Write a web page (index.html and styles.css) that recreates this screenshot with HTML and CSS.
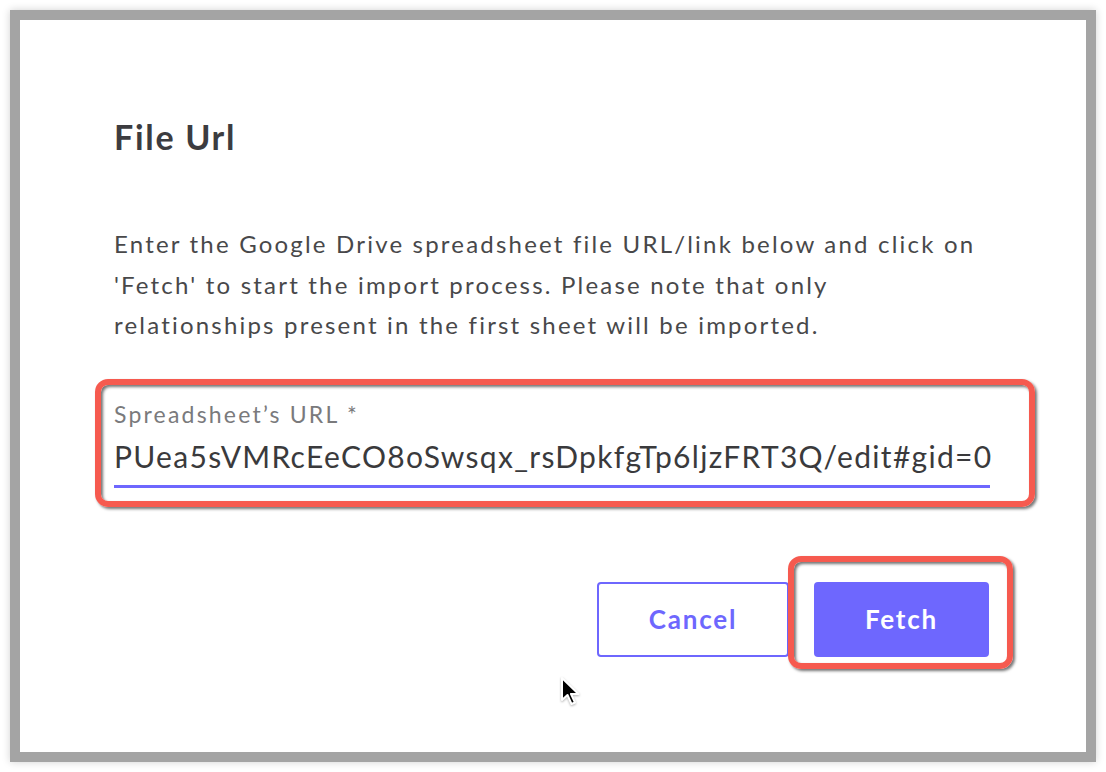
FILE: index.html
```html
<!DOCTYPE html>
<html lang="en">
  <head>
    <meta charset="UTF-8">
    <meta name="viewport" content="width=device-width, initial-scale=1.0">
    <title>File Url</title>
    <link rel="stylesheet" href="styles.css">
  </head>
  <body>
    <div class="frame">
      <div class="dialog">
        <h2 class="dialog-title">File Url</h2>
        <p class="dialog-text">Enter the Google Drive spreadsheet file URL/link below and click on 'Fetch' to start the import process. Please note that only relationships present in the first sheet will be imported.</p>

        <div class="field">
          <label class="field-label">Spreadsheet’s URL *</label>
          <div class="field-value">PUea5sVMRcEeCO8oSwsqx_rsDpkfgTp6ljzFRT3Q/edit#gid=0</div>
          <span class="highlight highlight-field"></span>
        </div>

        <div class="actions">
          <button class="btn btn-outline">Cancel</button>
          <div class="btn-wrap">
            <button class="btn btn-primary">Fetch</button>
            <span class="highlight highlight-btn"></span>
          </div>
        </div>

        <!-- mouse pointer -->
        <svg class="cursor" width="24" height="34" viewBox="0 0 24 34">
          <path d="M2 2 L2 24 L7.5 19 L11.5 28 L15 26.5 L11 18 L18.5 18 Z" fill="#000" stroke="#fff" stroke-width="2" stroke-linejoin="round"/>
        </svg>
      </div>
    </div>
  </body>
</html>
```

FILE: styles.css
```css
* {
  box-sizing: border-box;
}
body {
  margin: 0;
  background: #fff;
  font-family: Lato, "Open Sans", sans-serif;
}
.frame {
  margin: 10px;
  width: 1086px;
  height: 752px;
  border: 10px solid #a4a4a4;
  box-shadow: 0 0 8px rgba(0, 0, 0, 0.18);
  background: #fff;
}
.dialog {
  position: relative;
  padding: 97px 96px 0 94px;
}
.dialog-title {
  margin: 0;
  font-size: 34px;
  line-height: 40px;
  font-weight: 700;
  letter-spacing: 1.7px;
  color: #3c3c40;
}
.dialog-text {
  margin: 67px 0 0;
  font-size: 24px;
  line-height: 40.5px;
  letter-spacing: 2.2px;
  color: #48484a;
}
.field {
  position: relative;
  margin-top: 54px;
}
.field-label {
  display: block;
  font-size: 23px;
  line-height: 28px;
  letter-spacing: 2.2px;
  color: #7a7a7c;
}
.field-value {
  margin-top: 10px;
  padding-bottom: 11px;
  font-size: 30px;
  line-height: 36px;
  letter-spacing: 1.3px;
  color: #3a3a3c;
  white-space: nowrap;
  border-bottom: 3px solid #6e67fe;
}
.highlight {
  position: absolute;
  border: 6px solid #f65a4f;
  border-radius: 13px;
  box-shadow: 2px 2px 3px rgba(0, 0, 0, 0.55), inset 2px 2px 3px rgba(0, 0, 0, 0.55);
  pointer-events: none;
}
.highlight-field {
  top: -21px;
  bottom: -19px;
  left: -19px;
  right: -45px;
}
.actions {
  display: flex;
  justify-content: flex-end;
  gap: 25px;
  margin-top: 94px;
  padding-right: 1px;
}
.btn {
  height: 75px;
  border-radius: 4px;
  font-family: Lato, "Open Sans", sans-serif;
  font-size: 26px;
  font-weight: 700;
  letter-spacing: 1.8px;
  cursor: pointer;
}
.btn-outline {
  width: 192px;
  background: #fff;
  color: #6e67fe;
  border: 2px solid #6e67fe;
}
.btn-wrap {
  position: relative;
}
.btn-primary {
  width: 175px;
  background: #6e67fe;
  color: #fff;
  border: none;
}
.highlight-btn {
  top: -26px;
  bottom: -12px;
  left: -26px;
  right: -24px;
}
.cursor {
  position: absolute;
  left: 540px;
  top: 656px;
  filter: drop-shadow(0 1px 1px rgba(0, 0, 0, 0.3));
}
```
